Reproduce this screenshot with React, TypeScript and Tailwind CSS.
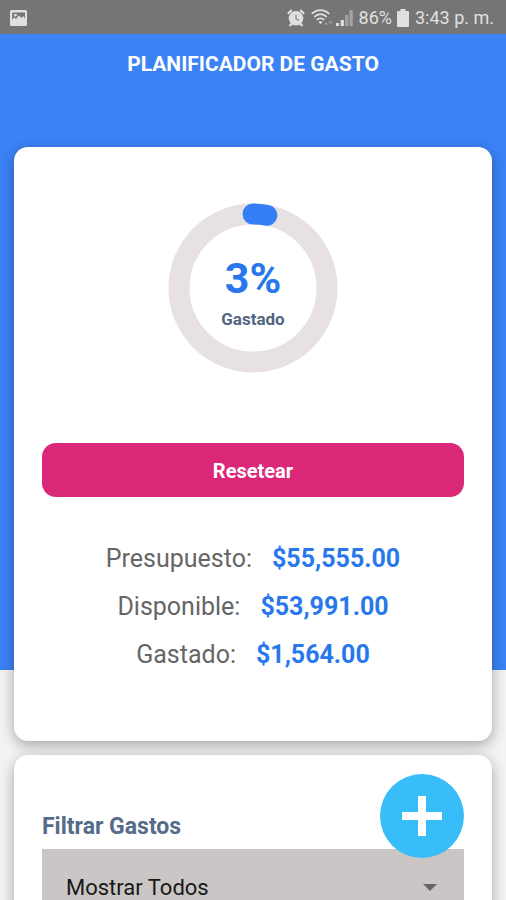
const amounts = [
  { label: 'Presupuesto:', value: '$55,555.00' },
  { label: 'Disponible:', value: '$53,991.00' },
  { label: 'Gastado:', value: '$1,564.00' },
];

const CARD =
  'rounded-[14px] bg-white px-7 shadow-[0_4px_14px_rgba(0,0,0,0.32)]';

function StatusBar() {
  return (
    <div className="flex h-[34px] items-center bg-[#757575] pt-px pr-3 pl-[10px] text-[18px] leading-6 text-[#e0e0e0]">
      <svg className="h-4 w-[17px]" viewBox="0 0 17 16" aria-hidden="true">
        <rect width="17" height="16" rx="1.5" fill="#e0e0e0" />
        <path
          d="M2.2 2.5h12.800v6.500l-1.500-3-2 2-2.500-2.500-3 3.500-1.800-1.500-2 2.500z"
          fill="#777"
        />
        <circle cx="5.5" cy="5.2" r="1.4" fill="#e0e0e0" />
      </svg>
      <div className="ml-auto flex items-center">
        <svg className="h-[18px] w-[18px]" viewBox="0 0 18 18" aria-hidden="true">
          <path
            d="M.8 4.800 4.800 1M17.200 4.800 13.200 1M2.500 17l3-3M15.500 17l-3-3"
            stroke="#e0e0e0"
            strokeWidth="2.2"
          />
          <circle cx="9" cy="9.300" r="7.300" fill="#e0e0e0" />
          <path d="M9 5.500v4.200l3 1.800" fill="none" stroke="#858585" strokeWidth="1.300" />
        </svg>
        <svg className="ml-[6px] h-[18px] w-[22px]" viewBox="0 0 22 18" aria-hidden="true">
          <g fill="none" stroke="#e0e0e0" strokeWidth="1.7">
            <path d="M.8 4.800C5.800-.2 13.200-.2 18.200 4.800" />
            <path d="M3.300 7.900c3.700-3.800 8.700-3.800 12.400 0" />
            <path d="M5.800 10.900c2.200-2.200 5.200-2.200 7.400 0" />
          </g>
          <path d="m7.500 12.800 2 2.400 2-2.400c-1-.9-3-.9-4 0z" fill="#e0e0e0" />
          <path d="m13 15.500 2-2.600 2 2.600zM17.500 12.500h4l-2 2.600z" fill="#a4a4a4" />
        </svg>
        <svg className="ml-[3px] h-4 w-[17px]" viewBox="0 0 17 16" aria-hidden="true">
          <path d="M0 16v-3h3v3zM4.700 16v-6h3.200v6z" fill="#e0e0e0" />
          <path d="M9.200 16V5h3.200v11zM13.500 16V0h3.300v16z" fill="#a4a4a4" />
        </svg>
        <span className="ml-[6px]">86%</span>
        <svg className="ml-[5px] h-[18px] w-3" viewBox="0 0 12 18" aria-hidden="true">
          <path
            d="M3.500 0h5v2H11a1 1 0 0 1 1 1v14a1 1 0 0 1-1 1H1a1 1 0 0 1-1-1V3a1 1 0 0 1 1-1h2.500z"
            fill="#e0e0e0"
          />
        </svg>
        <span className="ml-[6px] whitespace-nowrap">3:43 p. m.</span>
      </div>
    </div>
  );
}

function SpentRing({ percent }: { percent: number }) {
  return (
    <div className="mx-auto grid w-[170px] place-items-center">
      <svg
        className="col-start-1 row-start-1 h-[170px] w-[170px] -rotate-90"
        viewBox="0 0 170 170"
        fill="none"
        strokeWidth="21"
        aria-hidden="true"
      >
        <circle cx="85" cy="85" r="74" stroke="#e7e1e2" />
        <circle
          cx="85"
          cy="85"
          r="74"
          stroke="#347ff5"
          strokeLinecap="round"
          pathLength="100"
          strokeDasharray={`${percent} 100`}
        />
      </svg>
      <div className="col-start-1 row-start-1 flex flex-col items-center pt-2 font-bold">
        <span className="text-[43px] leading-[50px] text-[#2878ec]">{percent}%</span>
        <span className="mt-1 text-[17px] leading-6 text-[#526580]">Gastado</span>
      </div>
    </div>
  );
}

export default function App() {
  return (
    <div className="h-screen overflow-hidden bg-[#f3f3f3] font-[Roboto,sans-serif]">
      <StatusBar />
      <header className="h-[636px] bg-[#3b82f6] pt-[17px]">
        <h1 className="text-center text-[21px] leading-[26px] font-bold text-white">
          PLANIFICADOR DE GASTO
        </h1>
      </header>

      <main className="-mt-[523px] flex flex-col gap-[14px] px-[14px]">
        <section className={`${CARD} pt-14 pb-[62px]`}>
          <SpentRing percent={3} />
          <button
            type="button"
            className="mt-[70px] h-[54px] w-full rounded-[14px] bg-[#db2777] pt-px text-[20px] leading-6 font-bold text-white"
          >
            Resetear
          </button>
          <dl className="mt-[38px] flex flex-col text-[25px] leading-[48px]">
            {amounts.map((a) => (
              <div key={a.label} className="flex justify-center gap-5">
                <dt className="text-[#666]">{a.label}</dt>
                <dd className="font-bold text-[#2878ec]">{a.value}</dd>
              </div>
            ))}
          </dl>
        </section>

        <section className={`${CARD} pt-[58px] pb-14`}>
          <label
            htmlFor="filter"
            className="block text-[23px] leading-7 font-bold text-[#566b8a]"
          >
            Filtrar Gastos
          </label>
          <div className="mt-2 grid items-center bg-[#cac6c5]">
            <select
              id="filter"
              className="col-start-1 row-start-1 h-[76px] w-full appearance-none bg-transparent px-6 text-[22px] text-[#181818]"
            >
              <option>Mostrar Todos</option>
            </select>
            <svg
              className="pointer-events-none col-start-1 row-start-1 mr-[27px] h-[7px] w-[14px] justify-self-end"
              viewBox="0 0 14 7"
              aria-hidden="true"
            >
              <path d="M0 0h14L7 7z" fill="#656565" />
            </svg>
          </div>
        </section>
      </main>

      <button
        type="button"
        aria-label="Agregar gasto"
        className="fixed right-[42px] bottom-[42px] grid h-[84px] w-[84px] place-items-center rounded-full bg-[#38bdf8]"
      >
        <svg className="h-10 w-10" viewBox="0 0 40 40" aria-hidden="true">
          <path d="M16 0h8v16h16v8H24v16h-8V24H0v-8h16z" fill="#fff" />
        </svg>
      </button>
    </div>
  );
}
